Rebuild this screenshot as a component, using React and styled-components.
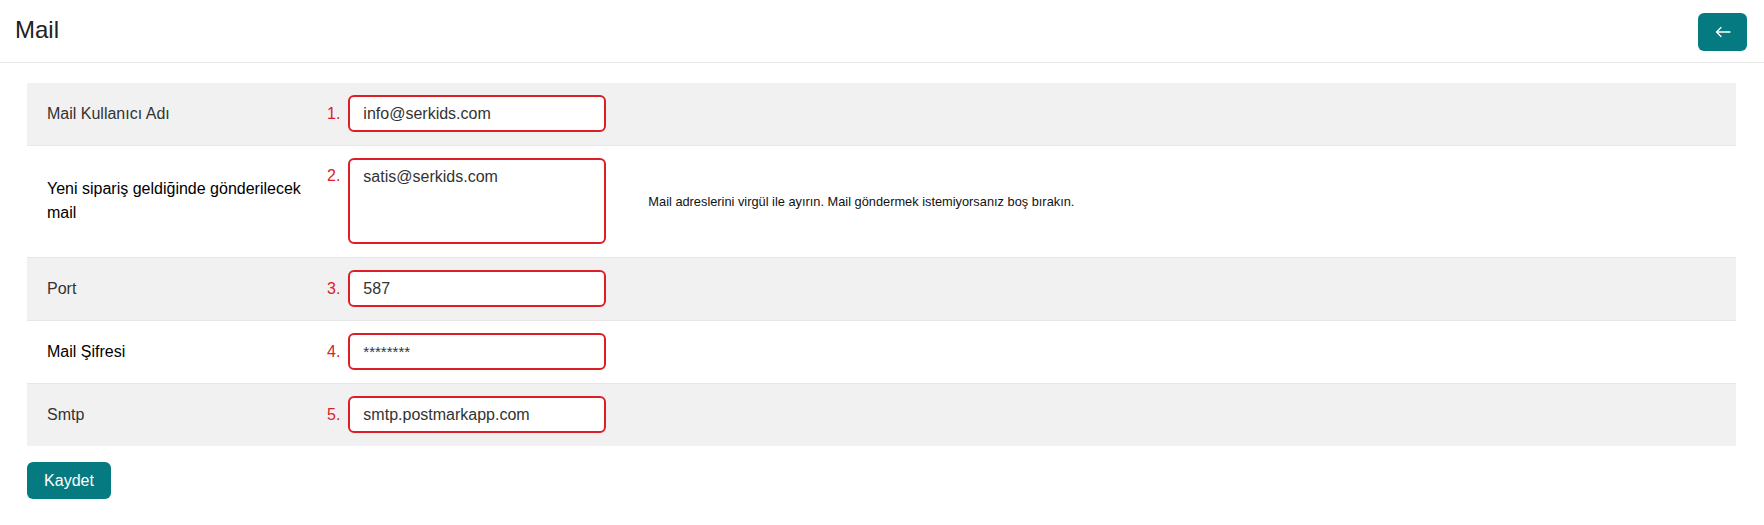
import styled, { createGlobalStyle } from "styled-components";

const GlobalStyle = createGlobalStyle`
  body {
    margin: 0;
    background: #fff;
    font-family: "Liberation Sans", Arial, sans-serif;
    color: #333;
  }
`;

const fields = [
  { label: "Mail Kullanıcı Adı", value: "info@serkids.com", shade: true },
  {
    label: "Yeni sipariş geldiğinde gönderilecek mail",
    value: "satis@serkids.com",
    multiline: true,
    dark: true,
    help: "Mail adreslerini virgül ile ayırın. Mail göndermek istemiyorsanız boş bırakın.",
  },
  { label: "Port", value: "587", shade: true },
  { label: "Mail Şifresi", value: "********", dark: true, secret: true },
  { label: "Smtp", value: "smtp.postmarkapp.com", shade: true },
];

const App = () => {
  return (
    <>
      <GlobalStyle />
      <Header>
        <Title>Mail</Title>
        <BackButton aria-label="Geri">
          <svg width="16" height="12" viewBox="0 0 16 12" fill="none">
            <path
              d="M15 6H1.5M6 1.5L1.5 6L6 10.5"
              stroke="#fff"
              strokeWidth="1.3"
              strokeLinecap="round"
              strokeLinejoin="round"
            />
          </svg>
        </BackButton>
      </Header>
      <Page>
        <Table>
          {fields.map((f, i) => (
            <Row key={f.label} $shade={f.shade} $first={i === 0}>
              <Label $dark={f.dark}>{f.label}</Label>
              <Number $top={f.multiline}>{i + 1}.</Number>
              {f.multiline ? (
                <TextArea defaultValue={f.value} />
              ) : (
                <Input defaultValue={f.value} $secret={f.secret} />
              )}
              <Help>{f.help}</Help>
            </Row>
          ))}
        </Table>
        <SaveButton>Kaydet</SaveButton>
      </Page>
    </>
  );
};

const Header = styled.header`
  height: 62px;
  border-bottom: 1px solid #e6e6e6;
  display: flex;
  align-items: center;
  justify-content: space-between;
  padding: 0 17px 0 15px;
`;

const Title = styled.h1`
  margin: 0;
  font-size: 24px;
  font-weight: 400;
  color: #222;
  line-height: 1;
  padding-bottom: 2px;
`;

const BackButton = styled.button`
  width: 49px;
  height: 38px;
  border: none;
  border-radius: 6px;
  background: #057b81;
  display: flex;
  align-items: center;
  justify-content: center;
  cursor: pointer;
  padding: 0;
  margin-top: 1px;
`;

const Page = styled.main`
  padding: 20px 28px 0 27px;
`;

const Table = styled.div`
  display: flex;
  flex-direction: column;
`;

const Row = styled.div`
  display: grid;
  grid-template-columns: 300px auto 258px 1fr;
  align-items: center;
  padding: 12px 0 13px;
  background: ${(p) => (p.$shade ? "#f1f1f1" : "#fff")};
  border-top: ${(p) => (p.$first ? "none" : "1px solid #e6e6e6")};
`;

const Label = styled.div`
  padding: 0 10px 0 20px;
  font-size: 16px;
  line-height: 24px;
  color: ${(p) => (p.$dark ? "#000" : "#333")};
`;

const Number = styled.span`
  align-self: ${(p) => (p.$top ? "start" : "center")};
  padding-top: ${(p) => (p.$top ? "8px" : "0")};
  margin-right: 8px;
  font-size: 16px;
  line-height: 20px;
  color: #dc2026;
`;

const fieldStyle = `
  box-sizing: border-box;
  width: 258px;
  border: 2px solid #dc1f27;
  border-radius: 6px;
  background: #fff;
  font-family: "Liberation Sans", Arial, sans-serif;
  color: #333;
  padding: 0 13px;
  outline: none;
`;

const Input = styled.input`
  ${fieldStyle}
  height: 37px;
  font-size: ${(p) => (p.$secret ? "15px" : "16px")};
`;

const TextArea = styled.textarea`
  ${fieldStyle}
  height: 86px;
  padding-top: 7px;
  font-size: 16px;
  line-height: 20px;
  resize: none;
  display: block;
`;

const Help = styled.div`
  padding-left: 42px;
  font-size: 12.8px;
  color: #111;
`;

const SaveButton = styled.button`
  margin-top: 16px;
  width: 84px;
  height: 37px;
  border: none;
  border-radius: 6px;
  background: #057b81;
  color: #fff;
  font-family: "Liberation Sans", Arial, sans-serif;
  font-size: 16px;
  cursor: pointer;
`;

export default App;
